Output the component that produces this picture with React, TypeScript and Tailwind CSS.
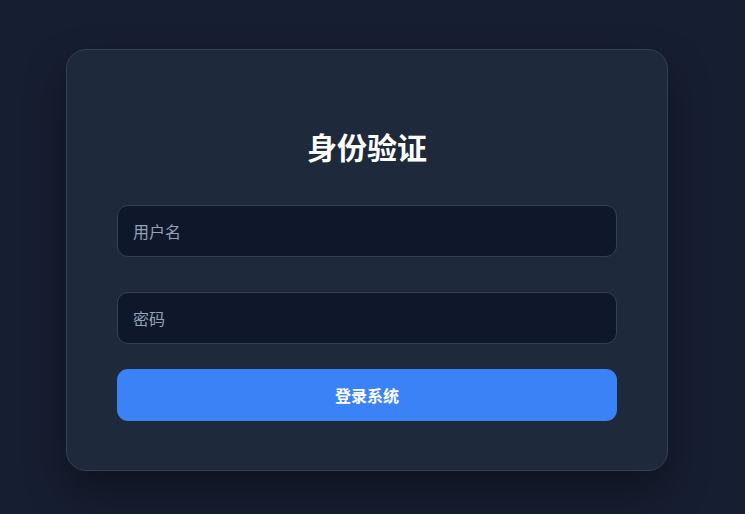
import React from "react";

export default function App() {
  return (
    <div
      className="min-h-[514px] w-full bg-[#161e31] flex justify-start"
      style={{ fontFamily: '"Noto Sans CJK SC", "Noto Sans", sans-serif' }}
    >
      <div className="ml-[66px] mt-[49px] w-[602px] h-[422px] rounded-[20px] border border-[#334155] bg-[#1e293b] px-[50px] shadow-[0_20px_40px_rgba(0,0,0,0.35)] flex flex-col">
        <h2 className="mt-[76px] h-[42px] leading-[40px] text-center text-[30px] font-bold text-white">
          身份验证
        </h2>
        <input
          className="mt-[37px] h-[52px] w-full rounded-[11px] border border-[#334155] bg-[#0f172a] px-[15px] text-[16px] text-white placeholder-[#94a3b8] outline-none"
          placeholder="用户名"
        />
        <input
          type="password"
          className="mt-[35px] h-[52px] w-full rounded-[11px] border border-[#334155] bg-[#0f172a] px-[15px] text-[16px] text-white placeholder-[#94a3b8] outline-none"
          placeholder="密码"
        />
        <button className="mt-[25px] h-[52px] w-full rounded-[11px] bg-[#3b82f6] text-[16px] font-bold text-white">
          登录系统
        </button>
      </div>
    </div>
  );
}
